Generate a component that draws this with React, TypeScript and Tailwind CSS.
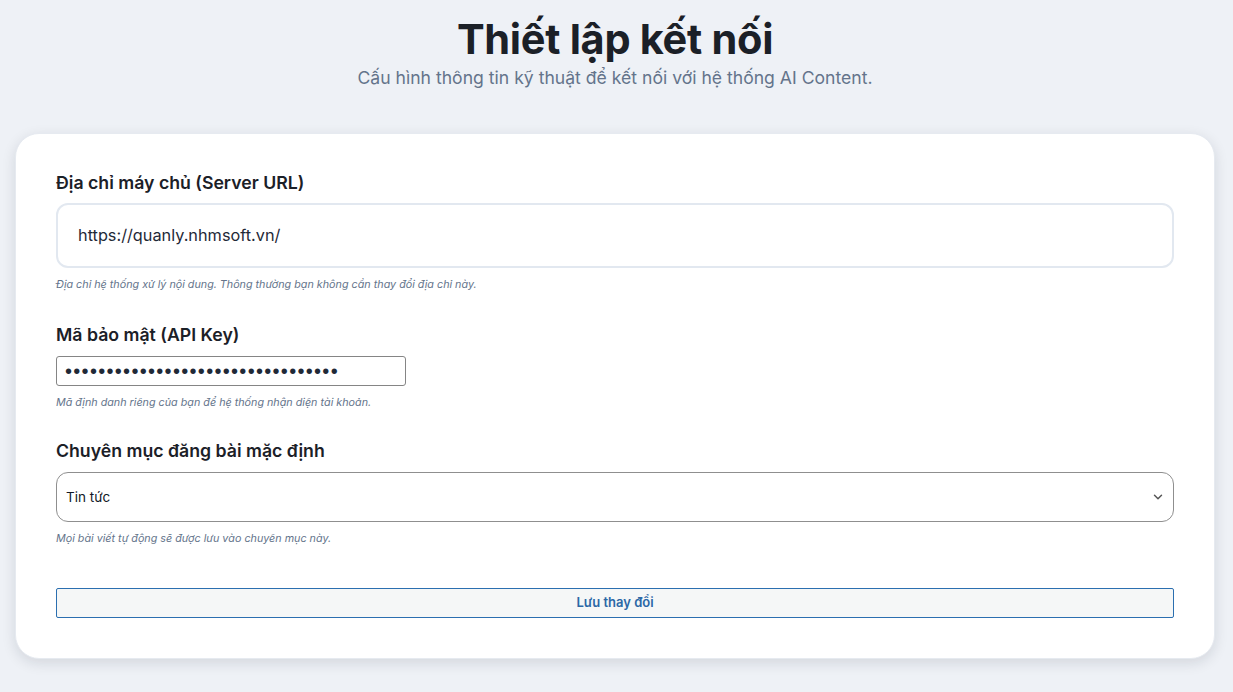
import React from "react";

export default function App() {
  return (
    <div className="min-h-[692px] w-full bg-[#eef1f6] pl-[15px] pr-[18px] pt-[14px] pb-[34px]" style={{ fontFamily: "Inter, 'Noto Sans', sans-serif" }}>
      <div className="flex flex-col items-center">
        <h1 className="text-[41.5px] font-bold leading-[50px] text-[#1b2027] tracking-[-0.3px]">Thiết lập kết nối</h1>
        <p className="mt-[2px] text-[17.6px] leading-[24px] text-[#64748b]">Cấu hình thông tin kỹ thuật để kết nối với hệ thống AI Content.</p>
      </div>
      <div className="mt-[43px] rounded-[24px] border border-[#e6eaf0] bg-white px-[40px] pt-[37px] pb-[40px] shadow-[0_4px_14px_rgba(15,23,42,0.12)]">
        <label className="block text-[17.7px] font-semibold leading-[24px] text-[#1b2027]">Địa chỉ máy chủ (Server URL)</label>
        <div className="mt-[8px] flex h-[65px] items-center rounded-[12px] border-2 border-[#e2e8f0] px-[20px] text-[16.3px] text-[#1f2937]">
          https://quanly.nhmsoft.vn/
        </div>
        <p className="mt-[10px] text-[10.75px] italic leading-[14px] text-[#64748b]">Địa chỉ hệ thống xử lý nội dung. Thông thường bạn không cần thay đổi địa chỉ này.</p>

        <label className="mt-[31px] block text-[17.7px] font-semibold leading-[24px] text-[#1b2027]">Mã bảo mật (API Key)</label>
        <input
          type="password"
          readOnly
          value="abcdefghijklmnopqrstuvwxyz1234567"
          className="mt-[9px] block h-[30px] w-[350px] rounded-[3px] border border-[#858585] bg-white px-[8px] text-[20px] tracking-[1.3px] text-[#1f2937] outline-none"
          style={{ fontFamily: "Arial, 'Liberation Sans', sans-serif" }}
        />
        <p className="mt-[10px] text-[10.75px] italic leading-[14px] text-[#64748b]">Mã định danh riêng của bạn để hệ thống nhận diện tài khoản.</p>

        <label className="mt-[29px] block text-[17.7px] font-semibold leading-[24px] text-[#1b2027]">Chuyên mục đăng bài mặc định</label>
        <div className="mt-[9px] flex h-[50px] items-center justify-between rounded-[12px] border border-[#8f8f8f] pl-[9px] pr-[8px] text-[13.5px] text-[#111827]">
          <span>Tin tức</span>
          <svg width="14" height="14" viewBox="0 0 24 24" fill="none" stroke="#555" strokeWidth="2.5" strokeLinecap="round" strokeLinejoin="round">
            <path d="M6 9l6 6 6-6" />
          </svg>
        </div>
        <p className="mt-[10px] text-[10.75px] italic leading-[14px] text-[#64748b]">Mọi bài viết tự động sẽ được lưu vào chuyên mục này.</p>

        <button className="mt-[42px] flex h-[30px] w-full items-center justify-center rounded-[2px] border border-[#2b6fb0] bg-[#f5f7f7] text-[13px] font-semibold text-[#2c68a6]">
          Lưu thay đổi
        </button>
      </div>
    </div>
  );
}
